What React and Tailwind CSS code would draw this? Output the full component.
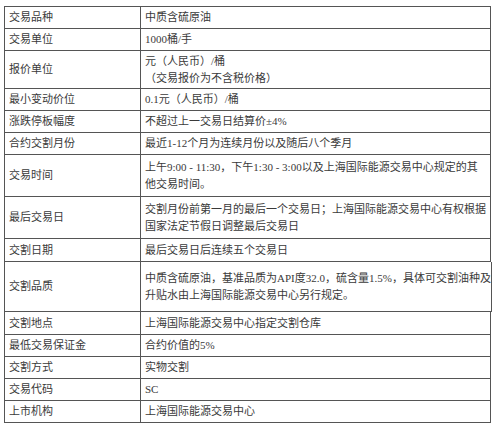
const rows = [
  { label: '交易品种', lines: ['中质含硫原油'], h: 'h-[22px]' },
  { label: '交易单位', lines: ['1000桶/手'], h: 'h-[22px]' },
  { label: '报价单位', lines: ['元（人民币）/桶', '（交易报价为不含税价格）'], h: 'h-[38px]' },
  { label: '最小变动价位', lines: ['0.1元（人民币）/桶'], h: 'h-[22px]' },
  { label: '涨跌停板幅度', lines: ['不超过上一交易日结算价±4%'], h: 'h-[22px]' },
  { label: '合约交割月份', lines: ['最近1-12个月为连续月份以及随后八个季月'], h: 'h-[22px]' },
  {
    label: '交易时间',
    lines: ['上午9:00 - 11:30，下午1:30 - 3:00以及上海国际能源交易中心规定的其', '他交易时间。'],
    h: 'h-[42px]',
  },
  {
    label: '最后交易日',
    lines: ['交割月份前第一月的最后一个交易日；上海国际能源交易中心有权根据', '国家法定节假日调整最后交易日'],
    h: 'h-[42px]',
  },
  { label: '交割日期', lines: ['最后交易日后连续五个交易日'], h: 'h-[23px]' },
  {
    label: '交割品质',
    lines: ['中质含硫原油，基准品质为API度32.0，硫含量1.5%，具体可交割油种及', '升贴水由上海国际能源交易中心另行规定。'],
    h: 'h-[50px]',
  },
  { label: '交割地点', lines: ['上海国际能源交易中心指定交割仓库'], h: 'h-[23px]' },
  { label: '最低交易保证金', lines: ['合约价值的5%'], h: 'h-[22px]' },
  { label: '交割方式', lines: ['实物交割'], h: 'h-[22px]' },
  { label: '交易代码', lines: ['SC'], h: 'h-[22px]' },
  { label: '上市机构', lines: ['上海国际能源交易中心'], h: 'h-[22px]' },
];

export default function App() {
  return (
    <div
      className="w-[500px] h-[429px] bg-white pt-[6px] pl-[4px] text-[11px] leading-[17px] text-[#3a3a3a]"
      style={{ fontFamily: '"Liberation Serif", "Noto Sans CJK SC", serif' }}
    >
      <div className="w-[487px] border-t border-l border-[#555]">
        {rows.map((row) => (
          <div key={row.label} className={`flex ${row.h}`}>
            {/* left label cell */}
            <div className="w-[136px] shrink-0 flex items-center pl-[4px] border-r border-b border-[#555] whitespace-nowrap">
              {row.label}
            </div>
            {/* right value cell */}
            <div className="flex-1 flex flex-col justify-center pl-[4px] border-r border-b border-[#555] whitespace-nowrap">
              {row.lines.map((line, i) => (
                <div key={i}>{line}</div>
              ))}
            </div>
          </div>
        ))}
      </div>
    </div>
  );
}
